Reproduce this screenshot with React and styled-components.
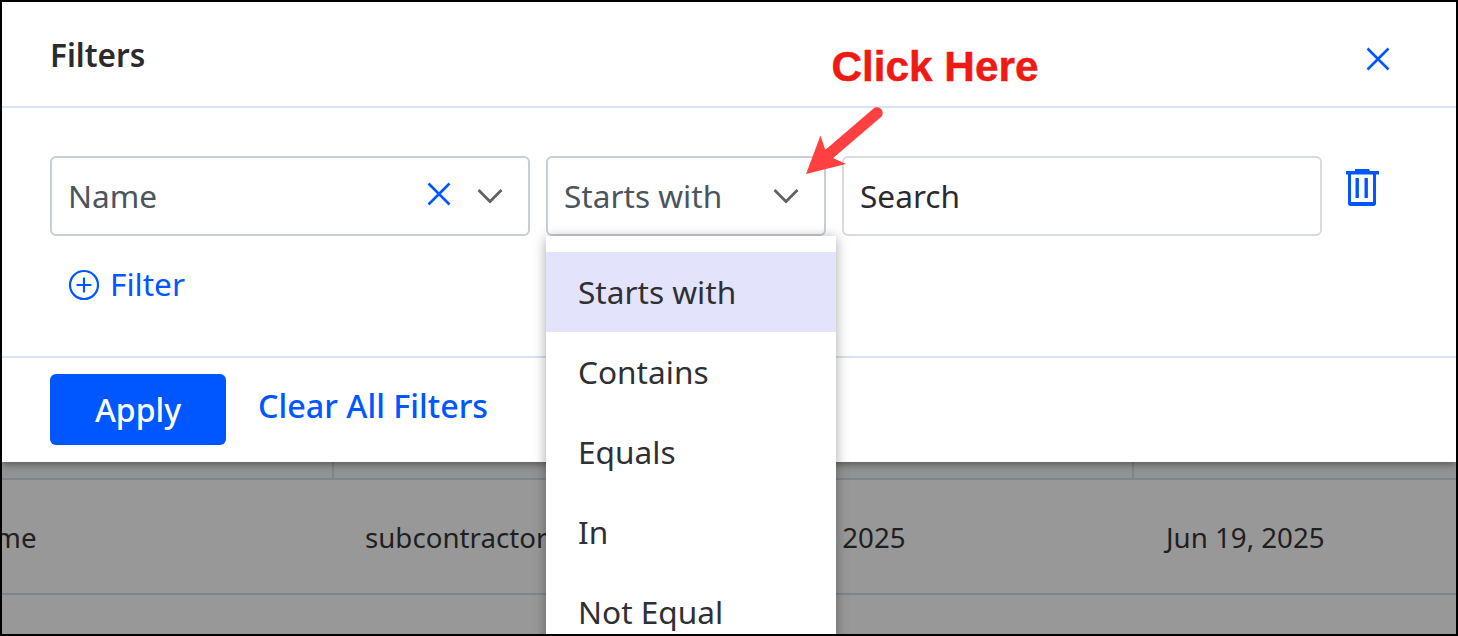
import React from "react";
import styled, { createGlobalStyle } from "styled-components";

const Global = createGlobalStyle`
  html, body { margin: 0; padding: 0; background: #fff; }
  * { box-sizing: border-box; }
  body { font-family: "Noto Sans", "Open Sans", sans-serif; }
`;

const Frame = styled.div`
  position: relative;
  width: 1458px;
  height: 636px;
  border: 2px solid #000;
  background: #989898;
  overflow: hidden;
`;

const Modal = styled.section`
  position: relative;
  z-index: 2;
  background: #fff;
  height: 460px;
  display: flex;
  flex-direction: column;
  box-shadow: 0 2px 8px rgba(0, 0, 0, 0.45);
`;

const Header = styled.header`
  height: 106px;
  flex: none;
  padding: 32px 66px 0 48px;
  display: flex;
  justify-content: space-between;
  align-items: flex-start;
  border-bottom: 2px solid #d9e2f3;
`;

const Title = styled.h2`
  margin: 0;
  font-size: 31.5px;
  line-height: 42px;
  font-weight: 600;
  color: #2b2b2d;
`;

const IconButton = styled.button`
  border: 0;
  background: none;
  padding: 0;
  display: block;
  line-height: 0;
  color: #0057ff;
  margin: ${(p) => p.$margin || 0};
`;

const Body = styled.div`
  height: 250px;
  flex: none;
  padding: 48px 0 0 48px;
  border-bottom: 2px solid #d9e2f3;
`;

const FilterRow = styled.div`
  display: flex;
  gap: 16px;
  align-items: flex-start;
`;

const Select = styled.div`
  position: relative;
  width: ${(p) => p.$width}px;
  height: 80px;
  display: flex;
  align-items: center;
  padding: 0 25px 0 16px;
  border: 2px solid #c8ced8;
  border-radius: 6px;
  background: #fff;
  font-size: 31.6px;
  color: #4c545c;
`;

const SelectText = styled.span`
  flex: 1;
  line-height: 1;
  padding-bottom: 1px;
`;

const SearchInput = styled.div`
  width: 480px;
  height: 80px;
  display: flex;
  align-items: center;
  padding: 0 16px 2px;
  border: 2px solid #d5dbe0;
  border-radius: 6px;
  font-size: 31.6px;
  color: #2b2b2d;
`;

const Menu = styled.ul`
  position: absolute;
  z-index: 3;
  top: 78px;
  left: -2px;
  width: 290px;
  margin: 0;
  padding: 16px 0 0;
  list-style: none;
  background: #fff;
  box-shadow: 0 2px 12px rgba(0, 0, 0, 0.35);
`;

const MenuItem = styled.li`
  height: 80px;
  display: flex;
  align-items: center;
  padding: 0 0 2px 32px;
  font-size: 31.6px;
  color: #2f3034;
  background: ${(p) => (p.$active ? "#e3e3fb" : "#fff")};
`;

const AddFilter = styled.button`
  margin: 28px 0 0 18px;
  padding: 0;
  border: 0;
  background: none;
  display: flex;
  align-items: center;
  gap: 10px;
  font: inherit;
  font-size: 31.6px;
  line-height: 40px;
  color: #0057ff;
`;

const PlusSvg = styled.svg`
  margin-top: 2px;
`;

const Footer = styled.footer`
  flex: 1;
  padding: 16px 0 0 48px;
  display: flex;
  align-items: flex-start;
  gap: 32px;
`;

const ApplyButton = styled.button`
  width: 176px;
  height: 71px;
  border: 0;
  border-radius: 6px;
  background: #0057ff;
  color: #fff;
  font: inherit;
  font-size: 32px;
  font-weight: 500;
`;

const ClearLink = styled.a`
  font-size: 32.3px;
  font-weight: 500;
  line-height: 40px;
  margin-top: 11px;
  color: #0057ff;
`;

const HeadStrip = styled.div`
  height: 18px;
  display: grid;
  grid-template-columns: 332px 400px 400px 1fr;
  background: #929493;
  border-bottom: 2px solid #7f858a;
`;

const HeadCell = styled.div`
  border-right: ${(p) => (p.$divider ? "2px solid #7f858a" : "0")};
`;

const Row = styled.div`
  height: 115px;
  display: grid;
  grid-template-columns: 332px 400px 400px 1fr;
  align-items: center;
  border-bottom: 2px solid #7f858a;
  font-size: 27.7px;
  color: #1f1f1f;
`;

const Cell = styled.div`
  padding-left: ${(p) => p.$pad || 0}px;
  text-indent: ${(p) => p.$indent || 0}px;
  white-space: nowrap;
`;

const Annotation = styled.div`
  position: absolute;
  z-index: 5;
  left: 829.5px;
  top: 41px;
  font-family: "Liberation Sans", Arial, sans-serif;
  font-weight: 700;
  font-size: 42.3px;
  line-height: 48px;
  color: #f01a14;
  -webkit-text-stroke: 0.5px #f01a14;
`;

const ArrowSvg = styled.svg`
  position: absolute;
  z-index: 5;
  left: 798px;
  top: 98px;
`;

const Cross = ({ size = 24 }) => (
  <svg width={size} height={size} viewBox="0 0 24 24" fill="none" stroke="currentColor" strokeWidth="2.6">
    <path d="M1.5 1.5 22.5 22.5M22.5 1.5 1.5 22.5" />
  </svg>
);

const Chevron = () => (
  <svg width="26" height="16" viewBox="0 0 26 16" fill="none" stroke="#5f6265" strokeWidth="2.8">
    <path d="M1.5 2 13 13.5 24.5 2" />
  </svg>
);

const Trash = () => (
  <svg width="34" height="38" viewBox="0 0 34 38" fill="#0057ff">
    <path d="M10 0h14l1 2h9v3.4H1V2h9z" />
    <path d="M3 5h3v28h22V5h3v29.5c0 1.6-1 2.5-2.5 2.5h-23C4 37 3 36 3 34.5z" />
    <rect x="10.500" y="9" width="3.400" height="20" />
    <rect x="19.500" y="9" width="3.400" height="20" />
  </svg>
);

const PlusCircle = () => (
  <PlusSvg width="32" height="32" viewBox="0 0 32 32" fill="none" stroke="#0057ff" strokeWidth="2.2">
    <circle cx="16" cy="16" r="14" />
    <path d="M16 8.500v15M8.500 16h15" />
  </PlusSvg>
);

export default function App() {
  return (
    <>
      <Global />
      <Frame>
        <Modal>
          <Header>
            <Title>Filters</Title>
            <IconButton $margin="13px 0 0">
              <Cross />
            </IconButton>
          </Header>
          <Body>
            <FilterRow>
              <Select $width={480}>
                <SelectText>Name</SelectText>
                <IconButton $margin="0 26px 4px 0">
                  <Cross />
                </IconButton>
                <Chevron />
              </Select>
              <Select $width={280}>
                <SelectText>Starts with</SelectText>
                <Chevron />
                <Menu>
                  <MenuItem $active>Starts with</MenuItem>
                  <MenuItem>Contains</MenuItem>
                  <MenuItem>Equals</MenuItem>
                  <MenuItem>In</MenuItem>
                  <MenuItem>Not Equal</MenuItem>
                </Menu>
              </Select>
              <SearchInput>Search</SearchInput>
              <IconButton $margin="13px 0 0 7px">
                <Trash />
              </IconButton>
            </FilterRow>
            <AddFilter>
              <PlusCircle />
              Filter
            </AddFilter>
          </Body>
          <Footer>
            <ApplyButton>Apply</ApplyButton>
            <ClearLink>Clear All Filters</ClearLink>
          </Footer>
        </Modal>
        <HeadStrip>
          <HeadCell $divider />
          <HeadCell />
          <HeadCell $divider />
          <HeadCell />
        </HeadStrip>
        <Row>
          <Cell $indent={-7}>me</Cell>
          <Cell $pad={31}>subcontractor</Cell>
          <Cell $pad={13}>Jun 19, 2025</Cell>
          <Cell $pad={32}>Jun 19, 2025</Cell>
        </Row>
        <Annotation>Click Here</Annotation>
        <ArrowSvg width="90" height="80" viewBox="0 0 90 80">
          <path d="M77 13 28 55" stroke="#ff4040" strokeWidth="11.500" strokeLinecap="round" />
          <path d="M6 74 20.500 35.500 25 49 33 58 46 64z" fill="#ff4040" />
        </ArrowSvg>
      </Frame>
    </>
  );
}
